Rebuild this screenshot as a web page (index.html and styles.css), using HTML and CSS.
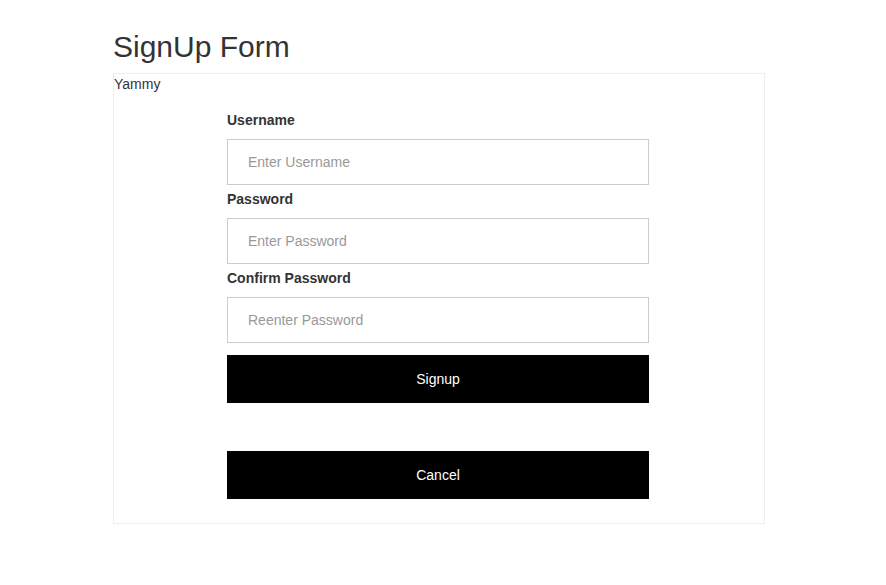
FILE: index.html
```html
<!DOCTYPE html>
<html>
<head>
<meta charset="utf-8">
<title>SignUp Form</title>
<link rel="stylesheet" href="styles.css">
</head>
<body>
<div class="page">
  <h2 class="title">SignUp Form</h2>
  <div class="panel">
    <div class="brand">Yammy</div>
    <form class="form">
      <label class="label" for="u">Username</label>
      <input class="input" id="u" type="text" placeholder="Enter Username">
      <label class="label" for="p">Password</label>
      <input class="input" id="p" type="password" placeholder="Enter Password">
      <label class="label" for="c">Confirm Password</label>
      <input class="input" id="c" type="password" placeholder="Reenter Password">
      <button class="btn btn-signup" type="button">Signup</button>
      <button class="btn btn-cancel" type="button">Cancel</button>
    </form>
  </div>
</div>
</body>
</html>
```

FILE: styles.css
```css
html, body {
  margin: 0;
  padding: 0;
  background: #fff;
}
body {
  font-family: "Liberation Sans", Arial, sans-serif;
  font-size: 14px;
  line-height: 20px;
  color: #333;
}
.page {
  padding: 30px 0 0 113px;
}
.title {
  margin: 0 0 10px 0;
  font-size: 30px;
  line-height: 33px;
  font-weight: normal;
  color: #333;
}
.panel {
  width: 650px;
  border: 1px solid #eeeeee;
  padding-bottom: 24px;
}
.brand {
  line-height: 20px;
}
.form {
  margin: 16px 0 0 113px;
  width: 422px;
  display: flex;
  flex-direction: column;
}
.label {
  display: block;
  font-weight: bold;
  line-height: 20px;
  margin: 4px 0 9px 0;
  color: #333;
}
.label:first-child {
  margin-top: 0;
}
.input {
  box-sizing: border-box;
  height: 46px;
  width: 100%;
  border: 1px solid #cccccc;
  padding: 0 20px;
  margin: 0;
  font-family: "Liberation Sans", Arial, sans-serif;
  font-size: 14px;
  color: #333;
  background: #fff;
  outline: none;
}
.input::placeholder {
  color: #999;
}
.btn {
  box-sizing: border-box;
  height: 48px;
  width: 100%;
  border: none;
  background: #000;
  color: #fff;
  font-family: "Liberation Sans", Arial, sans-serif;
  font-size: 14px;
  margin: 0;
  padding: 0;
  cursor: pointer;
}
.btn-signup {
  margin-top: 12px;
}
.btn-cancel {
  margin-top: 48px;
}
```
